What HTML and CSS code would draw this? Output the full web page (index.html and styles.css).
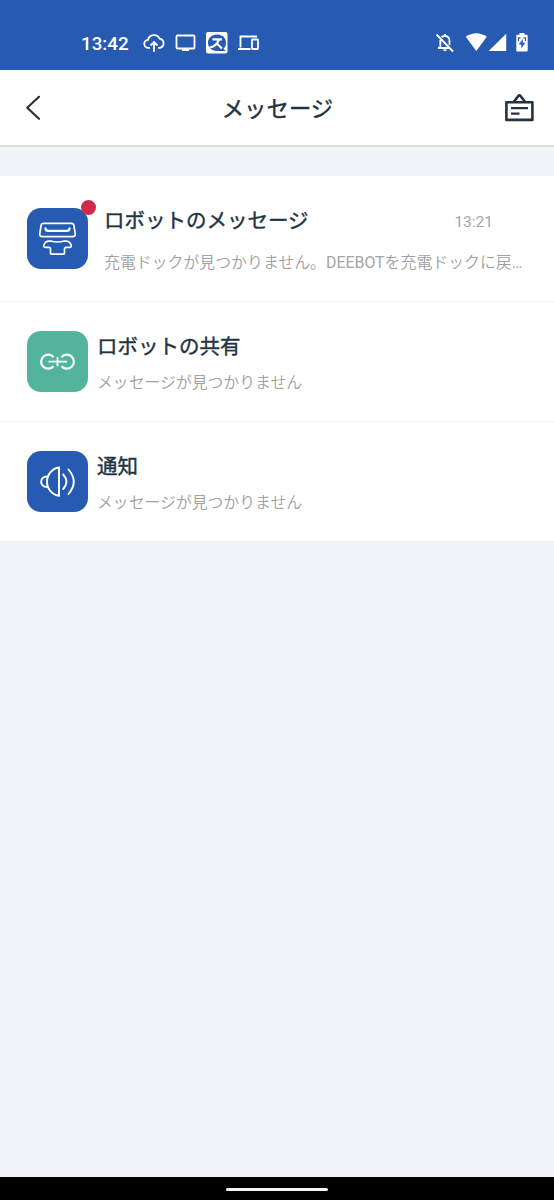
FILE: index.html
```
<!DOCTYPE html>
<html lang="ja">
<head>
<meta charset="utf-8">
<title>メッセージ</title>
<link rel="stylesheet" href="styles.css">
</head>
<body>
<div class="screen">
  <div class="status">
    <span class="clock">13:42</span>
    <svg class="status-left" width="118" height="24" viewBox="143 31 118 24" fill="none" stroke="#fff" stroke-width="1.800">
      <path d="M150 47.800h-1.500a4 4 0 0 1-.5-8 6.200 6.200 0 0 1 11.600-1.200 4.700 4.700 0 0 1 .4 9.200h-2M154 51.800v-9M150.500 45.500l3.500-3.500 3.500 3.500"/>
      <rect x="176.500" y="35.500" width="18" height="13" rx="1"/>
      <path d="M182 50h7" stroke-width="2"/>
      <rect x="206" y="32" width="21.500" height="21.500" rx="2" fill="#fff" stroke="none"/>
      <path d="M217 34.500c5.500 0 9 3.600 9 8.200 0 2.800-1.200 4.800-2.500 6l2.300 2.300H217c-5.500 0-9-3.600-9-8.200s3.500-8.300 9-8.300z" fill="#265bb1" stroke="none"/>
      <path d="M212.500 39.300h9.500M219 39.300c-1.500 4.200-4.500 7.500-9.500 8.200M216.800 43.500l5.200 5" stroke-width="2.200"/>
      <path d="M240.500 47.500v-11h16.500M238 49h12.500"/>
      <rect x="252" y="39.500" width="6" height="9.500" rx=".5"/>
    </svg>
    <svg class="status-right" width="96" height="24" viewBox="435 31 96 24" fill="none" stroke="#fff" stroke-width="1.800">
      <path d="M441.500 37.200c.8-.8 1.800-1.200 3.500-1.400 3 .3 4.500 2.600 4.500 5.200v4M440.300 40v7.500M438 48h11.500M445 34v2M436.500 34.500l16.500 17"/>
      <path d="M443 49.500h4c0 2.300-4 2.300-4 0z" fill="#fff" stroke="none"/>
      <path d="M465.800 36.800c6-4.900 15-4.900 21 0l-10.500 14.200z" fill="#fff" stroke="none"/>
      <path d="M506.200 33.800v17.300h-17.500z" fill="#fff" stroke="none"/>
      <path d="M519.500 33h5v1.800h2q1.200 0 1.200 1.200v14.300q0 1.200-1.200 1.200h-9q-1.200 0-1.200-1.200V36q0-1.200 1.200-1.200h2z" fill="#fff" stroke="none"/>
      <path d="M522.800 39l-4 5.600h2.500v4l4-5.800h-2.500z" fill="#265bb1" stroke="none"/>
      <path d="M518.500 41v-3.200h2M523.500 37.800h2V41" stroke="#265bb1" stroke-width="1.200"/>
    </svg>
  </div>
  <header class="header">
    <svg class="back" width="16" height="28" viewBox="25 94 16 28" fill="none" stroke="#233342" stroke-width="2.200" stroke-linecap="round" stroke-linejoin="round"><path d="M39 96.800L27.200 107.700 39 118.800"/></svg>
    <h1 class="title">メッセージ</h1>
    <svg class="board" width="30" height="30" viewBox="504 93 30 30" fill="none" stroke="#233342" stroke-width="2.600" stroke-linejoin="round" stroke-linecap="round"><path d="M506.400 102.300h26v17.600h-26zM514 101.500l4.300-5.500q1.100-1.200 2.200 0l4.300 5.500"/><path d="M511 108.200h17M511 113.700h8.500" stroke-linecap="butt" stroke-width="2.300"/></svg>
  </header>
  <main class="list">
    <section class="row row-unread">
      <div class="tile">
        <svg width="61" height="61" viewBox="0 0 61 61" fill="none" stroke="#fff" stroke-width="1.700" stroke-linejoin="round" stroke-linecap="round">
          <path d="M16.500 15.300h28q2 0 2.400 2l1.300 8.300q.3 3-2.500 3h-30.400q-2.800 0-2.500-3l1.300-8.300q.4-2 2.400-2z"/>
          <path d="M18.500 20.500q.3 2.300 2.500 2.300h19q2.200 0 2.500-2.300" stroke-width="2.300"/>
          <path d="M22 33.200h2.500q6 1.600 12 0h2.500c2.700 0 4.600 2 5.200 4.200.3 1.200-.5 1.900-1.600 1.900h-3.200q-1.900 0-1.900 1.800v4q0 1-1 1h-12q-1 0-1-1v-4q0-1.800-1.900-1.800h-3.200c-1.100 0-1.900-.7-1.600-1.900.6-2.200 2.500-4.200 5.200-4.200z"/>
        </svg>
        <span class="dot"></span>
      </div>
      <div class="body">
        <div class="heading"><h2 class="name">ロボットのメッセージ</h2><time class="time">13:21</time></div>
        <p class="text">充電ドックが見つかりません。<span class="latin">DEEBOT</span>を充電ドックに戻<span class="latin">…</span></p>
      </div>
    </section>
    <section class="row">
      <div class="tile tile-green">
        <svg width="61" height="61" viewBox="0 0 61 61" fill="none" stroke="#fff" stroke-width="2.200">
          <path d="M26.500 26.200a7 7 0 1 0 0 9M34.500 26.200a7 7 0 1 1 0 9"/>
          <path d="M21.500 30.700h18.500M30.500 26v9.300" stroke-width="1.800"/>
        </svg>
      </div>
      <div class="body"><h2 class="name">ロボットの共有</h2><p class="text">メッセージが見つかりません</p></div>
    </section>
    <section class="row">
      <div class="tile">
        <svg width="61" height="61" viewBox="0 0 61 61" fill="none" stroke="#fff" stroke-width="1.900" stroke-linecap="round">
          <path d="M32 16.500v28.300c-6.500-.8-12-6.800-12-14.100s5.500-13.400 12-14.200z"/>
          <path d="M20.500 25.500c-8.500-.5-8.500 11 0 10.500M36.200 23.500q6.500 7.200 0 14.500M41.500 18.500q10.500 12.200 0 24.500"/>
        </svg>
      </div>
      <div class="body"><h2 class="name">通知</h2><p class="text">メッセージが見つかりません</p></div>
    </section>
  </main>
  <div class="navbar"><span class="handle"></span></div>
</div>
</body>
</html>
```
FILE: styles.css
```
* { box-sizing: border-box; }
body { margin: 0; }
h1, h2, p { margin: 0; white-space: nowrap; }
svg { display: block; flex: none; }
.screen {
  display: flex;
  flex-direction: column;
  width: 554px;
  height: 1200px;
  background: #f2f4f9;
  color: #233342;
  font-family: Roboto, "Noto Sans CJK JP", sans-serif;
}
.status {
  display: flex;
  align-items: flex-start;
  height: 70px;
  padding: 31px 23px 0 81px;
  background: #265bb1;
  color: #fff;
}
.clock { width: 62px; font: 500 18.800px/26px Roboto, sans-serif; }
.status-right { margin-left: auto; }
.header {
  display: flex;
  align-items: center;
  justify-content: space-between;
  height: 77px;
  padding: 0 20px 0 25px;
  background: #fff;
  border-bottom: 2px solid #dcdedf;
}
.title {
  padding: 2px 0 0 10px;
  font-size: 22.400px;
  font-weight: 400;
  line-height: 32px;
  -webkit-text-stroke: .4px currentColor;
}
.list { margin-top: 29px; }
.row {
  display: flex;
  height: 120px;
  padding: 29px 30px 0 27px;
  background: #fff;
  border-bottom: 1px solid #f2f3f5;
}
.row-unread { height: 126px; padding-top: 32px; }
.tile {
  position: relative;
  flex: none;
  width: 61px;
  height: 61px;
  border-radius: 14px;
  background: #265bb1;
}
.tile-green { background: #52b49d; }
.dot {
  position: absolute;
  top: -8px;
  right: -8px;
  width: 15px;
  height: 15px;
  border-radius: 50%;
  background: #d02a4b;
}
.body { flex: 1; padding-left: 9px; }
.row-unread .body { padding-left: 16px; margin-top: -3px; }
.heading { display: flex; justify-content: space-between; padding-right: 31px; }
.name {
  padding-top: 1px;
  font-size: 20.500px;
  font-weight: 400;
  line-height: 30px;
  -webkit-text-stroke: .4px currentColor;
}
.time { padding-top: 2px; color: #a4a6a8; font-size: 15.500px; line-height: 30px; }
.text { margin-top: 9px; color: #9fa1a3; font-size: 15.850px; font-weight: 350; line-height: 24px; }
.latin { color: #a4a6a8; font-weight: 400; }
.row-unread .text { margin-top: 14px; font-size: 15.900px; }
.navbar {
  display: flex;
  justify-content: center;
  height: 23px;
  margin-top: auto;
  padding-top: 11px;
  background: #000;
}
.handle { width: 102px; height: 3px; border-radius: 2px; background: #f4f4f4; }
```
